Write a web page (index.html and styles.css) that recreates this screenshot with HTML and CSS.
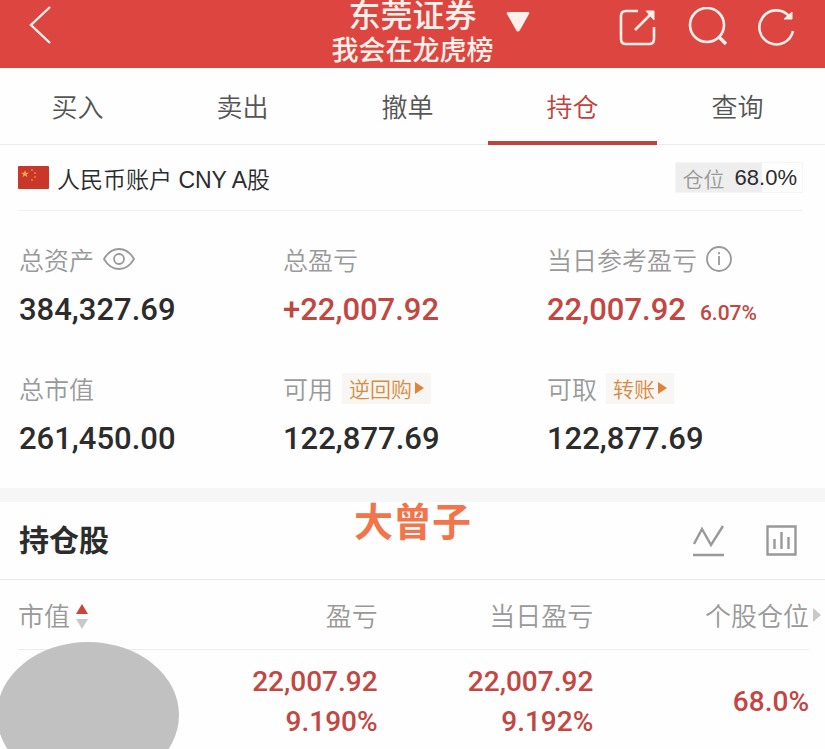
FILE: index.html
```html
<!DOCTYPE html>
<html lang="zh-CN">
<head>
    <meta charset="UTF-8">
    <meta name="viewport" content="width=device-width, initial-scale=1.0">
    <title>东莞证券</title>
    <link rel="stylesheet" href="styles.css">
</head>
<body>
    <header class="topbar">
        <button class="icon-button back" type="button" aria-label="返回">
            <svg width="24" height="40" viewBox="0 0 24 40" fill="none" stroke="currentColor" stroke-width="2.4"><path d="M21 2 2 20l19 18"/></svg>
        </button>
        <div class="broker">
            <h1 class="broker-name">东莞证券</h1>
            <p class="broker-sub">我会在龙虎榜</p>
        </div>
        <div class="topbar-right">
            <button class="icon-button switch" type="button" aria-label="切换账户">
                <svg width="24" height="20" viewBox="0 0 24 20" fill="currentColor"><path d="M2 0h20q2 0 1 2L14 18q-2 3-4 0L1 2Q0 0 2 0z"/></svg>
            </button>
            <div class="topbar-icons">
                <button class="icon-button" type="button" aria-label="分享">
                    <svg width="38" height="38" viewBox="0 0 38 38" fill="none" stroke="currentColor" stroke-width="2.6"><path d="M19 3H7Q2 3 2 8v23q0 5 5 5h23q5 0 5-5V19M16 22 34 4"/><path d="M27 3h8v9z" fill="currentColor" stroke-width="1"/></svg>
                </button>
                <button class="icon-button" type="button" aria-label="搜索">
                    <svg width="40" height="40" viewBox="0 0 40 40" fill="none" stroke="currentColor" stroke-width="2.6"><circle cx="20" cy="18" r="17"/><path d="m32 30 7 7" stroke-width="3.4"/></svg>
                </button>
                <button class="icon-button" type="button" aria-label="刷新">
                    <svg width="38" height="38" viewBox="0 0 38 38" fill="none" stroke="currentColor" stroke-width="2.6"><path d="M36 23A17 17 0 1 1 32 8"/><path d="M35 4v7h-8z" fill="currentColor" stroke-width="1"/></svg>
                </button>
            </div>
        </div>
    </header>

    <nav class="tabs">
        <a class="tab" href="#buy">买入</a>
        <a class="tab" href="#sell">卖出</a>
        <a class="tab" href="#cancel">撤单</a>
        <a class="tab active" href="#position" aria-current="page">持仓</a>
        <a class="tab" href="#query">查询</a>
    </nav>

    <main>
        <section class="account">
            <svg class="flag" width="31" height="23" viewBox="0 0 31 23">
                <rect width="31" height="23" rx="1" fill="#c9372a"/>
                <path d="m7 4 1 2.800h3L8.600 8.500l.9 2.800L7 9.600l-2.500 1.700.9-2.800L3 6.800h3z" fill="#f5a44a"/>
                <g fill="#e8843c"><circle cx="14" cy="4" r="1"/><circle cx="17" cy="7" r="1"/><circle cx="17" cy="11" r="1"/><circle cx="14" cy="14" r="1"/></g>
            </svg>
            <span class="account-name">人民币账户 CNY A股</span>
            <span class="ratio"><span class="ratio-label">仓位</span>68.0%</span>
        </section>

        <section class="stats">
            <div class="stat">
                <div class="label">总资产
                    <button class="icon-button" type="button" aria-label="隐藏金额">
                        <svg width="32" height="24" viewBox="0 0 32 24" fill="none" stroke="currentColor" stroke-width="1.8"><path d="M1 12C5 5 10 2 16 2s11 3 15 10c-4 7-9 10-15 10S5 19 1 12z"/><circle cx="16" cy="12" r="5"/></svg>
                    </button>
                </div>
                <div class="value">384,327.69</div>
            </div>
            <div class="stat">
                <div class="label">总盈亏</div>
                <div class="value up">+22,007.92</div>
            </div>
            <div class="stat">
                <div class="label">当日参考盈亏
                    <button class="icon-button" type="button" aria-label="说明">
                        <svg width="26" height="26" viewBox="0 0 26 26" fill="none" stroke="currentColor" stroke-width="1.8"><circle cx="13" cy="13" r="12"/><path d="M13 10v9M13 6v2.200"/></svg>
                    </button>
                </div>
                <div class="value up">22,007.92<span class="percent">6.07%</span></div>
            </div>
            <div class="stat">
                <div class="label">总市值</div>
                <div class="value">261,450.00</div>
            </div>
            <div class="stat">
                <div class="label">可用 <a class="tag" href="#repo">逆回购<span class="arrow"></span></a></div>
                <div class="value">122,877.69</div>
            </div>
            <div class="stat">
                <div class="label">可取 <a class="tag" href="#transfer">转账<span class="arrow"></span></a></div>
                <div class="value">122,877.69</div>
            </div>
        </section>

        <section class="holdings">
            <div class="holdings-head">
                <h2 class="holdings-title">持仓股</h2>
                <span class="watermark">大曾子</span>
                <div class="holdings-tools">
                    <button class="icon-button" type="button" aria-label="走势">
                        <svg width="31" height="32" viewBox="0 0 31 32" fill="none" stroke="currentColor" stroke-width="2.4"><path d="M1 19 9 4l9 16L30 1M0 30h31"/></svg>
                    </button>
                    <button class="icon-button" type="button" aria-label="统计">
                        <svg width="31" height="31" viewBox="0 0 31 31" fill="none" stroke="currentColor" stroke-width="2.4"><path d="M1.500 1.500h28v28h-28zM8.500 14v10M15.500 7v17M22.500 12v12"/></svg>
                    </button>
                </div>
            </div>
            <div class="table-wrap">
                <table class="table">
                    <thead>
                        <tr>
                            <th scope="col">市值<svg class="sort" width="12" height="25" viewBox="0 0 12 25"><path d="m6 0 6 10H0z" fill="#c9453b"/><path d="M0 15h12L6 25z" fill="#c8c9cc"/></svg></th>
                            <th scope="col">盈亏</th>
                            <th scope="col">当日盈亏</th>
                            <th scope="col">个股仓位</th>
                        </tr>
                    </thead>
                    <tbody>
                        <tr>
                            <td></td>
                            <td>22,007.92<br>9.190%</td>
                            <td>22,007.92<br>9.192%</td>
                            <td>68.0%</td>
                        </tr>
                    </tbody>
                </table>
                <span class="more"></span>
                <span class="mask"></span>
            </div>
        </section>
    </main>
</body>
</html>
```
FILE: styles.css
```css
* {
    margin: 0;
    padding: 0;
    box-sizing: border-box;
}

body {
    font-family: "Liberation Sans", "Noto Sans CJK SC", sans-serif;
    font-weight: 350;
    background: #fefefe;
    color: #2c2c2c;
}

a {
    color: inherit;
    text-decoration: none;
}

svg {
    display: block;
}

.icon-button {
    background: none;
    border: none;
    color: inherit;
    cursor: pointer;
}

/* top bar */
.topbar {
    display: grid;
    grid-template-columns: 1fr auto 1fr;
    grid-template-rows: 68px;
    align-items: end;
    background: #dc4540;
    color: #fff1ea;
}

.back {
    align-self: start;
    justify-self: start;
    padding: 5px 0 0 29px;
}

.broker {
    text-align: center;
    white-space: nowrap;
}

.broker-name {
    font-size: 32px;
    line-height: 36px;
    font-weight: 500;
}

.broker-sub {
    font-size: 27px;
    line-height: 34px;
    font-weight: 500;
}

.topbar-right {
    align-self: start;
    display: flex;
    justify-content: space-between;
    padding: 7px 30px 0 12px;
}

.switch {
    align-self: start;
    padding-top: 5px;
}

.topbar-icons {
    display: flex;
    gap: 30px;
}

/* tabs */
.tabs {
    display: flex;
    border-bottom: 1px solid #ececec;
}

.tab {
    flex: 1;
    position: relative;
    left: -5px;
    height: 76px;
    line-height: 80px;
    font-size: 26px;
    text-align: center;
    color: #555;
}

.tab.active {
    color: #c2403b;
}

.tab.active::after {
    content: '';
    position: absolute;
    left: -2px;
    right: -2px;
    bottom: -1px;
    height: 4px;
    background: #bb453e;
}

/* account */
.account {
    display: flex;
    align-items: center;
    height: 66px;
    margin: 0 22px 0 18px;
    border-bottom: 1px solid #f0f0f0;
}

.account-name {
    flex: 1;
    margin-left: 8px;
    font-size: 23px;
}

.ratio {
    display: flex;
    align-items: center;
    gap: 10px;
    height: 31px;
    padding: 0 5px 0 7px;
    border: 1px solid #f5f5f5;
    background: linear-gradient(90deg, #eee 68%, #fefefe 68%);
    font-size: 22px;
}

.ratio-label {
    font-size: 21px;
    color: #999;
}

/* totals */
.stats {
    display: grid;
    grid-template-columns: repeat(3, 1fr);
    row-gap: 42px;
    padding: 32px 14px 29px 19px;
}

.label {
    display: flex;
    align-items: center;
    gap: 9px;
    height: 32px;
    margin-bottom: 15px;
    font-size: 25px;
    color: #999;
    white-space: nowrap;
}

.value {
    height: 40px;
    font-family: Roboto, sans-serif;
    font-size: 31px;
    font-weight: 500;
    line-height: 40px;
}

.up {
    color: #c24641;
}

.percent {
    margin-left: 14px;
    font-size: 21px;
    line-height: 24px;
}

.tag {
    display: flex;
    align-items: center;
    gap: 3px;
    height: 31px;
    padding: 0 7px;
    background: #f8f6f3;
    font-size: 21px;
    color: #d98a42;
}

.arrow {
    border-left: 9px solid #e0813c;
    border-top: 6px solid transparent;
    border-bottom: 6px solid transparent;
}

/* holdings */
.holdings {
    border-top: 14px solid #f6f6f6;
}

.holdings-head {
    display: grid;
    grid-template-columns: 1fr auto 1fr;
    align-items: center;
    height: 78px;
    padding: 0 19px;
    border-bottom: 1px solid #e8e8e8;
}

.holdings-title {
    font-size: 30px;
    line-height: 40px;
    font-weight: 700;
}

.watermark {
    align-self: start;
    font-size: 39px;
    line-height: 42px;
    font-weight: 700;
    color: #f2744a;
}

.holdings-tools {
    display: flex;
    justify-content: flex-end;
    gap: 42px;
    padding-right: 9px;
    color: #999;
}

.table-wrap {
    position: relative;
    overflow: hidden;
    padding: 0 16px 0 18px;
}

.table {
    width: 100%;
    table-layout: fixed;
    border-collapse: collapse;
    text-align: right;
}

.table th {
    height: 69px;
    border-bottom: 1px solid #ececec;
    font-size: 26px;
    font-weight: 350;
    color: #999;
    white-space: nowrap;
}

.table th:first-child {
    width: 144px;
    text-align: left;
}

.sort {
    display: inline-block;
    margin-left: 6px;
    vertical-align: -3px;
}

.table td {
    padding: 12px 0 8px;
    font-family: Roboto, sans-serif;
    font-size: 28px;
    line-height: 40px;
    font-weight: 500;
    color: #c24641;
}

.more {
    position: absolute;
    top: 28px;
    right: 4px;
    border-left: 8px solid #c8c8c8;
    border-top: 7px solid transparent;
    border-bottom: 7px solid transparent;
}

/* covers the stock name */
.mask {
    position: absolute;
    left: -3px;
    top: 62px;
    width: 182px;
    height: 146px;
    border-radius: 50%;
    background: #c1c1c1;
}
```
